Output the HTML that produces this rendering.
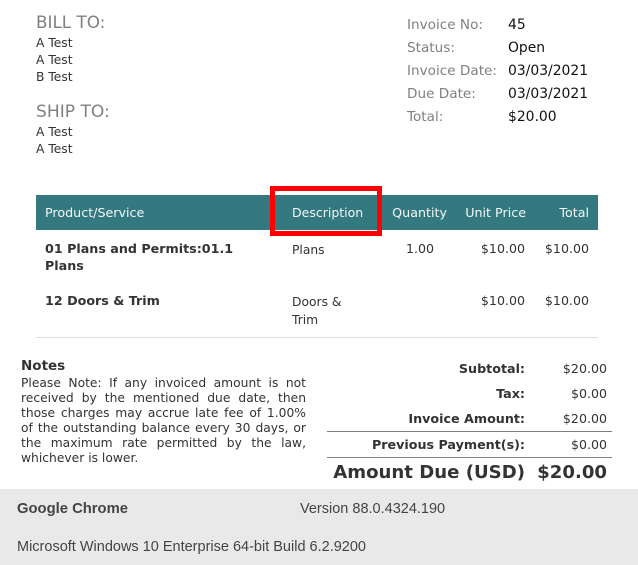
<!DOCTYPE html>
<html><head><meta charset="utf-8"><style>
html,body{margin:0;padding:0;background:#fff}
#p{position:relative;width:638px;height:565px;overflow:hidden;background:#fff;font-family:"DejaVu Sans","Liberation Sans",sans-serif;color:#333}
.t{position:absolute;white-space:nowrap;line-height:20px;height:20px}
.r{text-align:right}
.b{font-weight:bold}
.g{color:#808080}
.s{font-size:12.3px}
.h{font-size:12.7px;color:#f2f7f7}
.v{font-size:13.9px;color:#111}
.l{font-size:13.6px;color:#808080}
.m{font-size:12.6px}
.bb{font-size:12.7px;font-weight:bold}
.n{position:absolute;left:21px;width:285px;font-size:12.3px;line-height:15px;height:15px;text-align:justify;text-align-last:justify;white-space:nowrap;color:#333}
.f{font-family:"Liberation Sans",Arial,sans-serif;font-size:14.5px;color:#444}
</style></head><body><div id="p">
<div class="t g" style="left:36px;top:12px;font-size:16.8px">BILL TO:</div>
<div class="t s" style="left:36px;top:33px">A Test</div>
<div class="t s" style="left:36px;top:50px">A Test</div>
<div class="t s" style="left:36px;top:67px">B Test</div>
<div class="t g" style="left:36px;top:102px;font-size:17.1px">SHIP TO:</div>
<div class="t s" style="left:36px;top:122px">A Test</div>
<div class="t s" style="left:36px;top:139px">A Test</div>

<div class="t l" style="left:407px;top:15px">Invoice No:</div><div class="t v" style="left:508px;top:15px">45</div>
<div class="t l" style="left:407px;top:38px">Status:</div><div class="t v" style="left:508px;top:38px">Open</div>
<div class="t l" style="left:407px;top:61px">Invoice Date:</div><div class="t v" style="left:508px;top:61px">03/03/2021</div>
<div class="t l" style="left:407px;top:84px">Due Date:</div><div class="t v" style="left:508px;top:84px">03/03/2021</div>
<div class="t l" style="left:407px;top:107px">Total:</div><div class="t v" style="left:508px;top:107px">$20.00</div>

<div style="position:absolute;left:36px;top:195px;width:562px;height:35px;background:#347980"></div>
<div style="position:absolute;left:270px;top:186px;width:102px;height:40px;border:5px solid #f00;box-sizing:content-box"></div>
<div class="t h" style="left:45px;top:203px">Product/Service</div>
<div class="t h" style="left:292px;top:203px;font-size:12.5px">Description</div>
<div class="t h r" style="right:191px;top:203px">Quantity</div>
<div class="t h r" style="right:112px;top:203px">Unit Price</div>
<div class="t h r" style="right:49px;top:203px">Total</div>

<div class="t bb" style="left:45px;top:239px">01 Plans and Permits:01.1</div>
<div class="t bb" style="left:45px;top:256px">Plans</div>
<div class="t s" style="left:292px;top:240px">Plans</div>
<div class="t m" style="right:204px;top:239px">1.00</div>
<div class="t r m" style="right:113px;top:239px">$10.00</div>
<div class="t r m" style="right:49px;top:239px">$10.00</div>

<div class="t bb" style="left:45px;top:291px">12 Doors &amp; Trim</div>
<div class="t s" style="left:292px;top:292px">Doors &amp;</div>
<div class="t s" style="left:292px;top:310px">Trim</div>
<div class="t r m" style="right:113px;top:291px">$10.00</div>
<div class="t r m" style="right:49px;top:291px">$10.00</div>
<div style="position:absolute;left:36px;top:337px;width:562px;height:1px;background:#ddd"></div>

<div class="t b" style="left:21px;top:356px;font-size:13.5px">Notes</div>
<div class="n" style="top:376px">Please Note: If any invoiced amount is not</div>
<div class="n" style="top:391px">received by the mentioned due date, then</div>
<div class="n" style="top:406px">those charges may accrue late fee of 1.00%</div>
<div class="n" style="top:421px">of the outstanding balance every 30 days, or</div>
<div class="n" style="top:436px">the maximum rate permitted by the law,</div>
<div class="n" style="top:451px;text-align-last:left">whichever is lower.</div>

<div class="t bb r" style="right:113px;top:359px">Subtotal:</div><div class="t r m" style="right:31px;top:359px">$20.00</div>
<div class="t bb r" style="right:113px;top:384px">Tax:</div><div class="t r m" style="right:31px;top:384px">$0.00</div>
<div class="t bb r" style="right:113px;top:409px">Invoice Amount:</div><div class="t r m" style="right:31px;top:409px">$20.00</div>
<div style="position:absolute;left:327px;top:431px;width:285px;height:1px;background:#808080"></div>
<div class="t bb r" style="right:113px;top:435px">Previous Payment(s):</div><div class="t r m" style="right:31px;top:435px">$0.00</div>
<div style="position:absolute;left:327px;top:457px;width:285px;height:1px;background:#808080"></div>
<div class="t b r" style="right:113px;top:463px;font-size:18.1px">Amount Due (USD)</div><div class="t b r" style="right:31px;top:463px;font-size:18.1px">$20.00</div>

<div style="position:absolute;left:0;top:489px;width:638px;height:76px;background:#e9e9e9"></div>
<div class="t f b" style="left:17px;top:499px;font-size:14.8px">Google Chrome</div>
<div class="t f" style="left:300px;top:499px">Version 88.0.4324.190</div>
<div class="t f" style="left:17px;top:537px">Microsoft Windows 10 Enterprise 64-bit Build 6.2.9200</div>
</div></body></html>
